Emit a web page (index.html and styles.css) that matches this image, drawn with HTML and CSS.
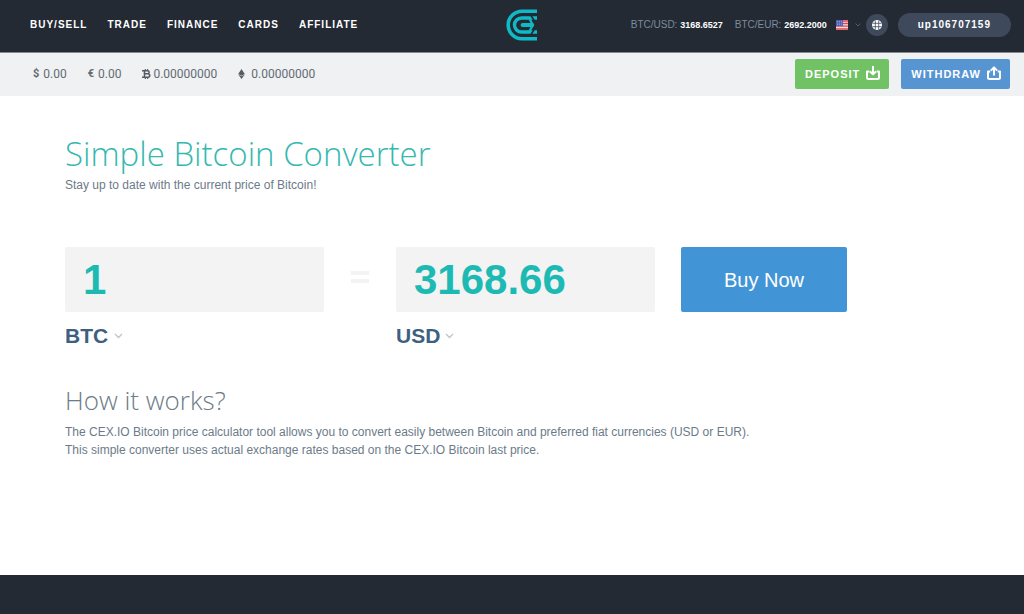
FILE: index.html
```html
<!DOCTYPE html>
<html lang="en">
<head>
<meta charset="utf-8">
<meta name="viewport" content="width=device-width, initial-scale=1">
<title>Simple Bitcoin Converter</title>
<link rel="stylesheet" href="styles.css">
</head>
<body>
<header class="topbar">
  <nav class="nav" aria-label="Main">
    <a href="#">BUY/SELL</a>
    <a href="#">TRADE</a>
    <a href="#">FINANCE</a>
    <a href="#">CARDS</a>
    <a href="#">AFFILIATE</a>
  </nav>
  <a class="logo" href="#" aria-label="CEX.IO">
    <svg width="32" height="32" viewBox="0 0 32 32" fill="none" stroke="#0fb9c5">
      <path d="M31 2.200H16A13.800 13.800 0 0 0 16 29.800H31" stroke-width="3.600"/>
      <path d="M31 9H15.500A7 7 0 0 0 15.500 23H31" stroke-width="3.400"/>
      <path d="M26 16H16.500" stroke-width="3.800" stroke-linecap="round"/>
      <path d="M23.500 10l3.500 6-3.500 6" stroke-width="2.200"/>
      <path d="M25 6.500l6 9.500-6 9.500" stroke="#242a34" stroke-width="1.600"/>
    </svg>
  </a>
  <div class="account">
    <span class="rate">BTC/USD: <b>3168.6527</b></span>
    <span class="rate">BTC/EUR: <b>2692.2000</b></span>
    <button class="language" type="button" aria-label="Language">
      <svg width="12" height="10" viewBox="0 0 12 10">
        <rect width="12" height="10" fill="#f3e4e4"/>
        <path d="M0 1h12M0 3.500h12M0 6.200h12M0 9h12" stroke="#d8434b" stroke-width="1.300"/>
        <rect width="7" height="6" fill="#5360b8"/>
        <path d="M1 1.500h5M1 3h5M1 4.500h5" stroke="#a9b0e4" stroke-width=".6" stroke-dasharray="1 1"/>
      </svg>
      <svg width="6" height="4" viewBox="0 0 6 4"><path d="M.5.5 3 3 5.500.5" fill="none" stroke="#4d5a6a"/></svg>
    </button>
    <button class="support" type="button" aria-label="Support">
      <svg width="10" height="10" viewBox="0 0 10 10">
        <circle cx="5" cy="5" r="5" fill="#fff"/>
        <path d="M3.300.5v9M6.700.5v9M.5 3.300h9M.5 6.700h9" stroke="#3e4a5c" stroke-width=".8"/>
      </svg>
    </button>
    <button class="user" type="button">up106707159</button>
  </div>
</header>

<section class="wallet" aria-label="Balances">
  <ul class="balances">
    <li><b>$</b> 0.00</li>
    <li><b>€</b> 0.00</li>
    <li class="bitcoin">
      <svg width="9" height="10" viewBox="0 0 8 10" preserveAspectRatio="none" fill="none" stroke="#555c63">
        <path d="M0 1.700h4.800a1.500 1.500 0 0 1 0 3.100H2.200M2.200 4.900h3a1.700 1.700 0 0 1 0 3.400H0M2.200 1.700v6.600" stroke-width="1.400"/>
        <path d="M3 0v1.500M5 0v1.500M3 8.500V10M5 8.500V10"/>
      </svg>0.00000000
    </li>
    <li class="ether">
      <svg width="7" height="10" viewBox="0 0 7 10" fill="#555c63">
        <path d="M3.500 0 6.800 5 3.500 6.700.2 5ZM.2 5.600 3.500 7.300 6.800 5.600 3.500 10Z"/>
      </svg>0.00000000
    </li>
  </ul>
  <div class="actions">
    <button class="action deposit" type="button">DEPOSIT
      <svg width="14" height="14" viewBox="0 0 14 14" fill="none" stroke="#fff" stroke-width="2" stroke-linejoin="round">
        <path d="M3.200 5.500H1V11.500Q1 13 2.500 13H11.500Q13 13 13 11.500V5.500H10.800"/><path d="M7 0v8M3.800 5.200 7 8.400 10.200 5.200"/>
      </svg>
    </button>
    <button class="action withdraw" type="button">WITHDRAW
      <svg width="14" height="14" viewBox="0 0 14 14" fill="none" stroke="#fff" stroke-width="2" stroke-linejoin="round">
        <path d="M3.200 5.500H1V11.500Q1 13 2.500 13H11.500Q13 13 13 11.500V5.500H10.800"/><path d="M7 9.500V1.500M3.800 4.600 7 1.400 10.200 4.600"/>
      </svg>
    </button>
  </div>
</section>

<main class="content">
  <h1>Simple Bitcoin Converter</h1>
  <p>Stay up to date with the current price of Bitcoin!</p>

  <form class="converter">
    <div class="field">
      <input type="text" value="1" aria-label="Amount in BTC">
      <label class="currency">
        <select aria-label="From currency"><option>BTC</option></select>
        <svg width="9" height="6" viewBox="0 0 9 6"><path d="M1 1l3.500 3.500L8 1" fill="none" stroke="#bfc4ca" stroke-width="1.300"/></svg>
      </label>
    </div>
    <div class="equals" aria-hidden="true"><i></i><i></i></div>
    <div class="field">
      <input type="text" value="3168.66" aria-label="Amount in USD">
      <label class="currency">
        <select aria-label="To currency"><option>USD</option><option>EUR</option></select>
        <svg width="9" height="6" viewBox="0 0 9 6"><path d="M1 1l3.500 3.500L8 1" fill="none" stroke="#bfc4ca" stroke-width="1.300"/></svg>
      </label>
    </div>
    <button class="buy" type="button">Buy Now</button>
  </form>

  <h2>How it works?</h2>
  <p>The CEX.IO Bitcoin price calculator tool allows you to convert easily between Bitcoin and preferred fiat currencies (USD or EUR).<br>
  This simple converter uses actual exchange rates based on the CEX.IO Bitcoin last price.</p>
</main>

<footer class="footer"></footer>
</body>
</html>
```
FILE: styles.css
```css
* { box-sizing: border-box; }

body {
  display: flex;
  flex-direction: column;
  min-height: 100vh;
  margin: 0;
  background: #fff;
  color: #6c7b89;
  font: 12px/18px "Liberation Sans", Arial, sans-serif;
}

button, input, select {
  margin: 0;
  padding: 0;
  border: 0;
  background: none;
  color: inherit;
  font: inherit;
}

button { cursor: pointer; }
svg { display: block; flex: none; }

.topbar {
  display: grid;
  grid-template-columns: 1fr auto 1fr;
  align-items: center;
  padding: 9px 13px 11px 30px;
  border-bottom: 1px solid #85888f;
  background: #242a34;
}

.nav {
  display: flex;
  gap: 20px;
  font-size: 10px;
  font-weight: bold;
  letter-spacing: 1px;
}

.nav a { color: #fff; text-decoration: none; }

.logo { margin-left: 2px; }

.account {
  display: flex;
  align-items: center;
  justify-content: flex-end;
}

.rate {
  margin-right: 12px;
  color: #7b8a9d;
  font-size: 10px;
  white-space: nowrap;
}

.rate b { color: #fff; font-size: 9px; }

.language {
  display: flex;
  align-items: center;
  gap: 7px;
  margin: 0 5px 0 -3px;
}

.support {
  display: grid;
  place-items: center;
  width: 22px;
  height: 22px;
  margin-right: 10px;
  border-radius: 50%;
  background: #3e4a5c;
}

.user {
  padding: 3px 20px;
  border-radius: 12px;
  background: #3e4a5c;
  color: #fff;
  font-size: 10px;
  font-weight: bold;
  letter-spacing: 1px;
}

.wallet {
  display: flex;
  align-items: center;
  justify-content: space-between;
  padding: 6px 14px 7px 33px;
  background: #eff1f3;
}

.balances {
  display: flex;
  gap: 21px;
  margin: 0;
  padding: 0;
  list-style: none;
  color: #646b72;
  font: 12px/16px Roboto, sans-serif;
}

.balances li { display: flex; align-items: center; gap: 4px; }
.balances b { font-size: 11px; }
.balances .bitcoin { gap: 2px; }
.balances .ether { gap: 6px; }

.actions { display: flex; gap: 12px; }

.action {
  display: flex;
  align-items: center;
  gap: 6px;
  height: 30px;
  padding: 0 9px 0 10px;
  border-radius: 2px;
  color: #fff;
  font-size: 11px;
  font-weight: bold;
  letter-spacing: 1px;
}

.action svg { margin-bottom: 3px; }
.deposit { background: #70c265; }
.withdraw { background: #5795d2; }

.content { flex: 1; padding: 36px 65px; }

h1, h2 {
  margin: 0;
  font-family: "Open Sans", sans-serif;
  font-weight: 300;
}

h1 { color: #35b8b0; font-size: 33px; line-height: 44px; }
h2 { margin-top: 31px; font-size: 26px; line-height: 40px; }

p { margin: 0; }
h2 + p { margin-top: 3px; }

.converter { display: flex; margin-top: 53px; }

.field { flex: 0 1 259px; min-width: 0; }

.field input {
  width: 100%;
  height: 65px;
  padding: 0 18px;
  border-radius: 2px;
  background: #f3f3f3;
  color: #1dbab4;
  font-size: 42px;
  font-weight: bold;
}

.currency {
  display: flex;
  align-items: center;
  gap: 4px;
  margin-top: 11px;
  color: #3f5f82;
  font-size: 21px;
  font-weight: bold;
  line-height: 26px;
}

.currency select { appearance: none; width: 45px; }

.equals {
  display: grid;
  align-content: center;
  gap: 4px;
  width: 72px;
  height: 60px;
  padding: 0 27px;
}

.equals i { height: 4px; background: #f3f3f3; }

.buy {
  width: 166px;
  height: 65px;
  margin-left: 26px;
  border-radius: 2px;
  background: #4195d7;
  color: #fff;
  font-size: 20px;
}

.footer { height: 39px; background: #242a34; }
```
